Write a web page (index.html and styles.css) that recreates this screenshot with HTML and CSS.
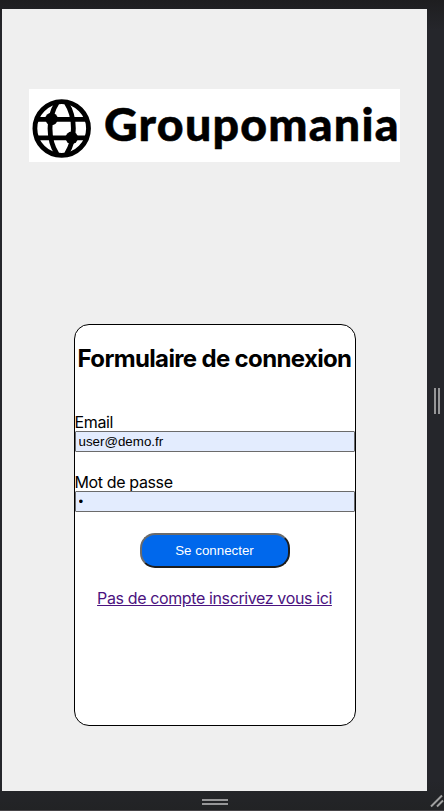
FILE: index.html
```html
<!DOCTYPE html>
<html lang="fr">
<head>
<meta charset="utf-8">
<title>Groupomania</title>
<link rel="stylesheet" href="styles.css">
</head>
<body>
<div class="frame">
  <main class="viewport">
    <svg class="logo" viewBox="0 0 371 73" role="img" aria-label="Groupomania">
      <g class="globe">
        <circle cx="32.7" cy="39.5" r="26.8"/>
        <path d="M28 14C18.7 28 18.7 51 28 65M37.4 14C46.7 28 46.7 51 37.4 65"/>
        <path d="M8 30.3H57.5M8 48.8H57.5"/>
        <circle class="node" cx="22.5" cy="30" r="6.2"/>
        <circle class="node" cx="42.7" cy="48.8" r="6.2"/>
      </g>
      <text class="wordmark" x="75" y="52" textLength="294.5" lengthAdjust="spacing">Groupomania</text>
    </svg>
    <form class="card">
      <h1>Formulaire de connexion</h1>
      <label for="email"><span>Email</span></label>
      <input id="email" type="text" value="user@demo.fr">
      <label for="password"><span>Mot de passe</span></label>
      <input id="password" type="text" value="•">
      <button type="button">Se connecter</button>
      <a href="#">Pas de compte inscrivez vous ici</a>
    </form>
  </main>
  <div class="side"><i class="grip grip-v"></i></div>
  <div class="bottom"><i class="grip grip-h"></i></div>
  <svg class="corner" viewBox="0 0 17 20"><path d="M4 15.5L15 4.5M10 15.5L16 9.5"/></svg>
</div>
</body>
</html>
```

FILE: styles.css
```css
* { box-sizing: border-box; }
body { margin: 0; background: #212225; font-family: Inter, sans-serif; color: #000; overflow: hidden; }
.frame {
  height: 811px;
  padding: 9px 0 0 2px;
  display: grid;
  grid-template-columns: 425px 17px;
  grid-template-rows: 782px 20px;
  background: linear-gradient(#1e1e20, #25262b 30px, #25262b 780px, #222325);
  border-bottom: 1px solid #464448;
}
.viewport {
  background: #efefef;
  display: flex;
  flex-direction: column;
  align-items: center;
  padding-top: 80px;
}
.logo { width: 371px; height: 73px; background: #fff; display: block; }
.globe { fill: none; stroke: #000; stroke-width: 4.8; }
.globe .node { fill: #000; stroke: none; }
.wordmark { font: 900 46.5px Lato, sans-serif; stroke: #000; stroke-width: 0.5px; }
.card {
  width: 282px;
  height: 402px;
  margin-top: 162px;
  border: 1px solid #000;
  border-radius: 15px;
  background: #fff;
  display: flex;
  flex-direction: column;
  align-items: center;
}
h1 { margin: 19px 0 40px; font-size: 24px; line-height: 29px; font-weight: 700; letter-spacing: -0.65px; white-space: nowrap; }
label { width: 100%; height: 18px; font-size: 16px; line-height: 18px; letter-spacing: -0.37px; }
input {
  width: 280px;
  height: 21px;
  margin: 0 0 21px;
  padding: 1px 3px;
  border: 1px solid #6b6b6b;
  border-radius: 1px;
  background: #e3ecfe;
  color: #000;
  font: 13.33px "Liberation Sans", sans-serif;
}
button {
  width: 150px;
  height: 35px;
  border: 2px solid;
  border-color: #6b6b6b #1d1d1d #1d1d1d #6b6b6b;
  border-radius: 15px;
  padding: 0;
  background: #0068ec;
  color: #fff;
  font: 13.33px "Liberation Sans", sans-serif;
}
a { margin-top: 21px; font-size: 16px; line-height: 19px; letter-spacing: -0.38px; color: #4b1380; white-space: nowrap; }
.side, .bottom { display: flex; align-items: center; justify-content: center; }
.side { padding: 2px 0 0 3px; }
.bottom { padding-top: 2px; }
.grip-v { width: 6px; height: 26px; border: solid #969698; border-width: 0 2px; }
.grip-h { width: 26px; height: 6px; border: solid #969698; border-width: 2px 0; }
.corner { width: 17px; height: 20px; fill: none; stroke: #a0a0a0; stroke-width: 2; }
```
